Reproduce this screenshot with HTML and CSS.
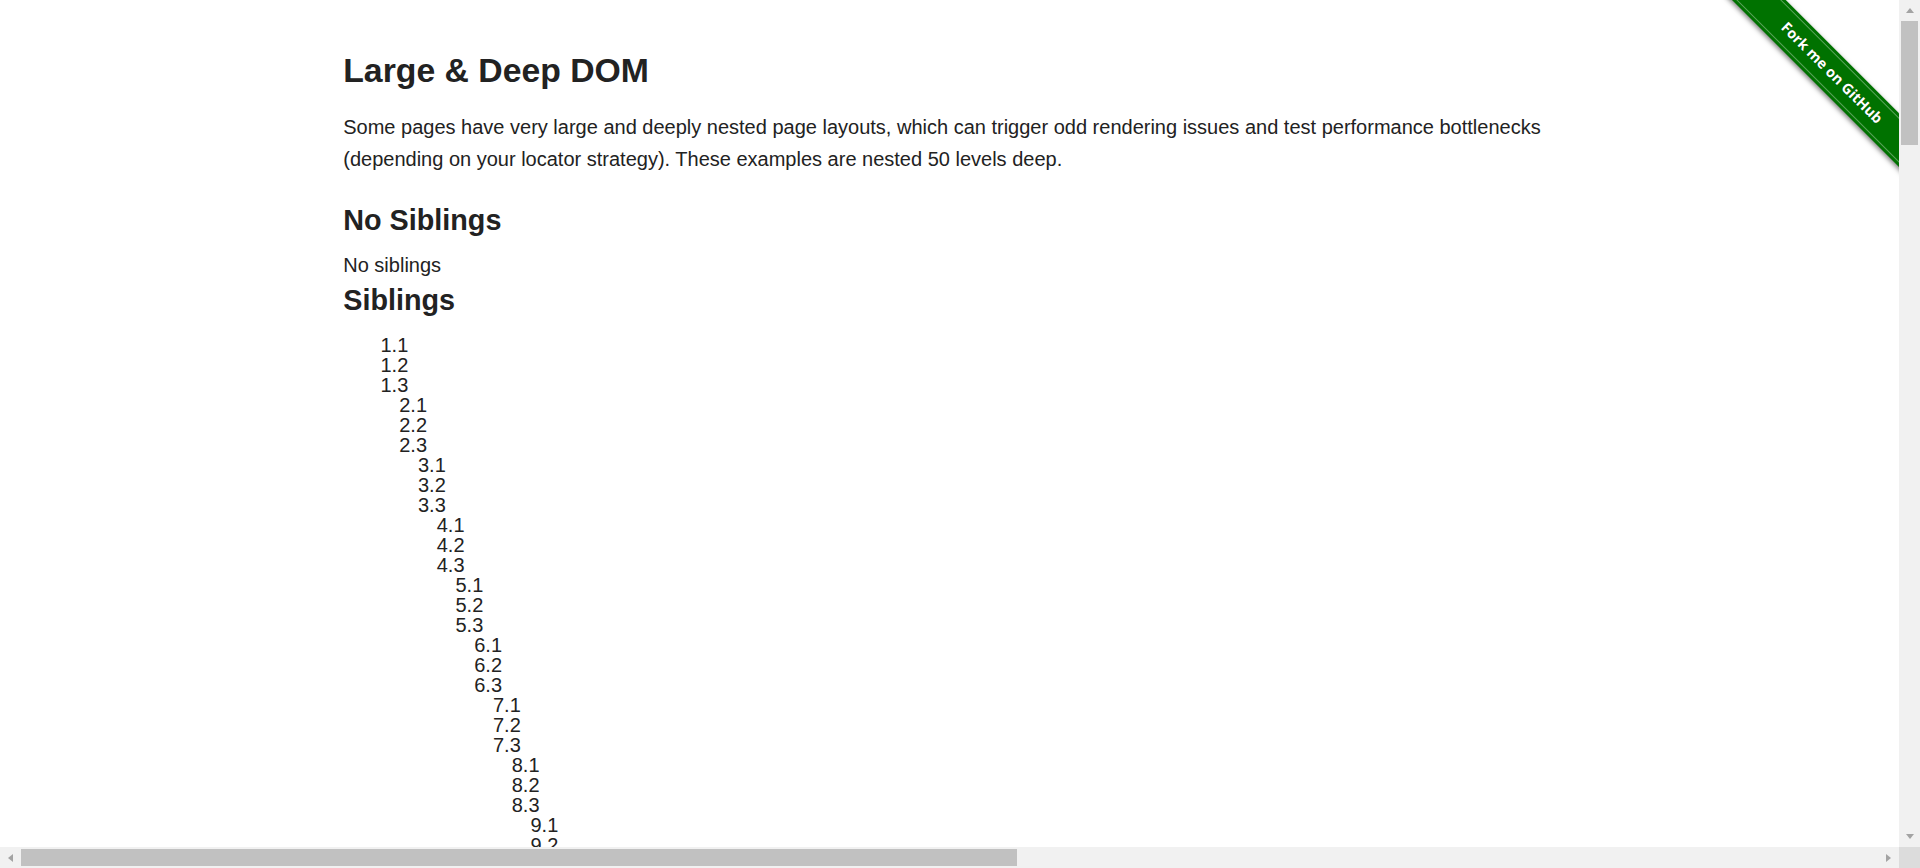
FILE: index.html
```html
<!DOCTYPE html>
<html lang="en">
<head>
<meta charset="utf-8">
<title>The Internet</title>
<link rel="stylesheet" href="styles.css">
</head>
<body>
<div class="window">
  <div class="page-area">
    <a class="ribbon" href="#"><span class="ribbon-band">Fork me on GitHub</span></a>
    <div class="row">
      <div class="content">
        <div class="example">
          <h3 class="title">Large &amp; Deep DOM</h3>
          <p class="intro">Some pages have very large and deeply nested page layouts, which can trigger odd rendering issues and test performance bottlenecks (depending on your locator strategy). These examples are nested 50 levels deep.</p>
          <h4 class="subtitle">No Siblings</h4>
          <div class="no-siblings">No siblings</div>
          <h4 class="subtitle">Siblings</h4>
          <div class="siblings">
<div class="lvl"><div class="it">1.1</div><div class="it">1.2</div><div class="it">1.3
<div class="lvl"><div class="it">2.1</div><div class="it">2.2</div><div class="it">2.3
<div class="lvl"><div class="it">3.1</div><div class="it">3.2</div><div class="it">3.3
<div class="lvl"><div class="it">4.1</div><div class="it">4.2</div><div class="it">4.3
<div class="lvl"><div class="it">5.1</div><div class="it">5.2</div><div class="it">5.3
<div class="lvl"><div class="it">6.1</div><div class="it">6.2</div><div class="it">6.3
<div class="lvl"><div class="it">7.1</div><div class="it">7.2</div><div class="it">7.3
<div class="lvl"><div class="it">8.1</div><div class="it">8.2</div><div class="it">8.3
<div class="lvl"><div class="it">9.1</div><div class="it">9.2</div><div class="it">9.3
<div class="lvl"><div class="it">10.1</div><div class="it">10.2</div><div class="it">10.3
<div class="lvl"><div class="it">11.1</div><div class="it">11.2</div><div class="it">11.3
<div class="lvl"><div class="it">12.1</div><div class="it">12.2</div><div class="it">12.3
<div class="lvl"><div class="it">13.1</div><div class="it">13.2</div><div class="it">13.3
<div class="lvl"><div class="it">14.1</div><div class="it">14.2</div><div class="it">14.3
<div class="lvl"><div class="it">15.1</div><div class="it">15.2</div><div class="it">15.3
<div class="lvl"><div class="it">16.1</div><div class="it">16.2</div><div class="it">16.3
<div class="lvl"><div class="it">17.1</div><div class="it">17.2</div><div class="it">17.3
<div class="lvl"><div class="it">18.1</div><div class="it">18.2</div><div class="it">18.3
<div class="lvl"><div class="it">19.1</div><div class="it">19.2</div><div class="it">19.3
<div class="lvl"><div class="it">20.1</div><div class="it">20.2</div><div class="it">20.3
<div class="lvl"><div class="it">21.1</div><div class="it">21.2</div><div class="it">21.3
<div class="lvl"><div class="it">22.1</div><div class="it">22.2</div><div class="it">22.3
<div class="lvl"><div class="it">23.1</div><div class="it">23.2</div><div class="it">23.3
<div class="lvl"><div class="it">24.1</div><div class="it">24.2</div><div class="it">24.3
<div class="lvl"><div class="it">25.1</div><div class="it">25.2</div><div class="it">25.3
<div class="lvl"><div class="it">26.1</div><div class="it">26.2</div><div class="it">26.3
<div class="lvl"><div class="it">27.1</div><div class="it">27.2</div><div class="it">27.3
<div class="lvl"><div class="it">28.1</div><div class="it">28.2</div><div class="it">28.3
<div class="lvl"><div class="it">29.1</div><div class="it">29.2</div><div class="it">29.3
<div class="lvl"><div class="it">30.1</div><div class="it">30.2</div><div class="it">30.3
<div class="lvl"><div class="it">31.1</div><div class="it">31.2</div><div class="it">31.3
<div class="lvl"><div class="it">32.1</div><div class="it">32.2</div><div class="it">32.3
<div class="lvl"><div class="it">33.1</div><div class="it">33.2</div><div class="it">33.3
<div class="lvl"><div class="it">34.1</div><div class="it">34.2</div><div class="it">34.3
<div class="lvl"><div class="it">35.1</div><div class="it">35.2</div><div class="it">35.3
<div class="lvl"><div class="it">36.1</div><div class="it">36.2</div><div class="it">36.3
<div class="lvl"><div class="it">37.1</div><div class="it">37.2</div><div class="it">37.3
<div class="lvl"><div class="it">38.1</div><div class="it">38.2</div><div class="it">38.3
<div class="lvl"><div class="it">39.1</div><div class="it">39.2</div><div class="it">39.3
<div class="lvl"><div class="it">40.1</div><div class="it">40.2</div><div class="it">40.3
<div class="lvl"><div class="it">41.1</div><div class="it">41.2</div><div class="it">41.3
<div class="lvl"><div class="it">42.1</div><div class="it">42.2</div><div class="it">42.3
<div class="lvl"><div class="it">43.1</div><div class="it">43.2</div><div class="it">43.3
<div class="lvl"><div class="it">44.1</div><div class="it">44.2</div><div class="it">44.3
<div class="lvl"><div class="it">45.1</div><div class="it">45.2</div><div class="it">45.3
<div class="lvl"><div class="it">46.1</div><div class="it">46.2</div><div class="it">46.3
<div class="lvl"><div class="it">47.1</div><div class="it">47.2</div><div class="it">47.3
<div class="lvl"><div class="it">48.1</div><div class="it">48.2</div><div class="it">48.3
<div class="lvl"><div class="it">49.1</div><div class="it">49.2</div><div class="it">49.3
<div class="lvl"><div class="it">50.1</div><div class="it">50.2</div><div class="it">50.3</div></div>
</div></div></div></div></div></div></div></div></div></div></div></div></div></div>
</div></div></div></div></div></div></div></div></div></div></div></div></div></div>
</div></div></div></div></div></div></div></div></div></div></div></div></div></div>
</div></div></div></div></div></div></div></div></div></div></div></div></div></div>
</div></div></div></div></div></div></div></div></div></div></div></div></div></div>
</div></div></div></div></div></div></div></div></div></div></div></div></div></div>
</div></div></div></div></div></div></div></div></div></div></div></div></div></div>
          </div>
        </div>
      </div>
    </div>
  </div>
  <div class="vbar">
    <div class="sb-btn"><span class="arrow arrow-up"></span></div>
    <div class="sb-track sb-track-v"><div class="sb-thumb sb-thumb-v"></div></div>
    <div class="sb-btn"><span class="arrow arrow-down"></span></div>
  </div>
  <div class="hbar">
    <div class="sb-btn"><span class="arrow arrow-left"></span></div>
    <div class="sb-track sb-track-h"><div class="sb-thumb sb-thumb-h"></div></div>
    <div class="sb-btn"><span class="arrow arrow-right"></span></div>
  </div>
  <div class="sb-corner"></div>
</div>
</body>
</html>
```

FILE: styles.css
```css
html, body {
  margin: 0;
  padding: 0;
  height: 100%;
  overflow: hidden;
}

body {
  font-family: "Liberation Sans", Arial, Helvetica, sans-serif;
  font-size: 20px;
  color: #222222;
  background: #ffffff;
}

.window {
  display: grid;
  grid-template-columns: 1fr 21px;
  grid-template-rows: 1fr 21px;
  height: 100vh;
}

.page-area {
  position: relative;
  overflow: hidden;
  background: #ffffff;
}

/* scrollbars */
.vbar {
  display: flex;
  flex-direction: column;
  background: #f1f1f1;
}

.hbar {
  display: flex;
  flex-direction: row;
  background: #f1f1f1;
}

.sb-corner {
  background: #dcdcdc;
}

.sb-btn {
  flex: 0 0 21px;
  width: 21px;
  height: 21px;
  display: flex;
  align-items: center;
  justify-content: center;
}

.sb-track {
  flex: 1 1 auto;
  display: flex;
}

.sb-track-v {
  flex-direction: column;
}

.sb-thumb {
  background: #c1c1c1;
}

.sb-thumb-v {
  height: 124px;
  margin: 0 2px;
}

.sb-thumb-h {
  width: 996px;
  margin: 2px 0;
}

.arrow {
  width: 0;
  height: 0;
}

.arrow-up {
  border-left: 4.5px solid transparent;
  border-right: 4.5px solid transparent;
  border-bottom: 5px solid #a3a3a3;
}

.arrow-down {
  border-left: 4.5px solid transparent;
  border-right: 4.5px solid transparent;
  border-top: 5px solid #a3a3a3;
}

.arrow-left {
  border-top: 4.5px solid transparent;
  border-bottom: 4.5px solid transparent;
  border-right: 5px solid #a3a3a3;
}

.arrow-right {
  border-top: 4.5px solid transparent;
  border-bottom: 4.5px solid transparent;
  border-left: 5px solid #a3a3a3;
}

/* page */
.row {
  max-width: 1250px;
  margin: 0 auto;
}

.content {
  padding: 47px 18.75px 0;
}

.title {
  font-size: 33.75px;
  line-height: 47.25px;
  font-weight: 700;
  margin: 0 0 17px;
}

.intro {
  font-size: 20px;
  line-height: 32px;
  margin: 0 0 25px;
}

.subtitle {
  font-size: 28.75px;
  line-height: 40.25px;
  font-weight: 700;
  margin: 0 0 10px;
}

.no-siblings {
  line-height: 29px;
}

.siblings {
  padding-left: 18.5px;
  padding-top: 5.5px;
  line-height: 20px;
}

.lvl {
  margin-left: 18.75px;
}

/* ribbon */
.ribbon {
  position: absolute;
  top: 0;
  right: 0;
  width: 186px;
  height: 186px;
  overflow: hidden;
  text-decoration: none;
  z-index: 2;
}

.ribbon-band {
  position: absolute;
  left: -11px;
  top: 53.5px;
  width: 260px;
  height: 37.5px;
  background: #007200;
  transform: rotate(45deg);
  box-shadow: 0 2px 5px rgba(0, 0, 0, 0.5);
  color: #ffffff;
  font-family: "Open Sans", "DejaVu Sans", sans-serif;
  font-weight: 700;
  font-size: 14.5px;
  line-height: 37.5px;
  text-align: center;
  text-shadow: 0 0 1px rgba(0, 0, 0, 0.4);
}

.ribbon-band::before {
  content: "";
  position: absolute;
  left: 0;
  right: 0;
  top: 3px;
  bottom: 3px;
  border-top: 1px solid rgba(255, 255, 255, 0.35);
  border-bottom: 1px solid rgba(255, 255, 255, 0.35);
}
```
